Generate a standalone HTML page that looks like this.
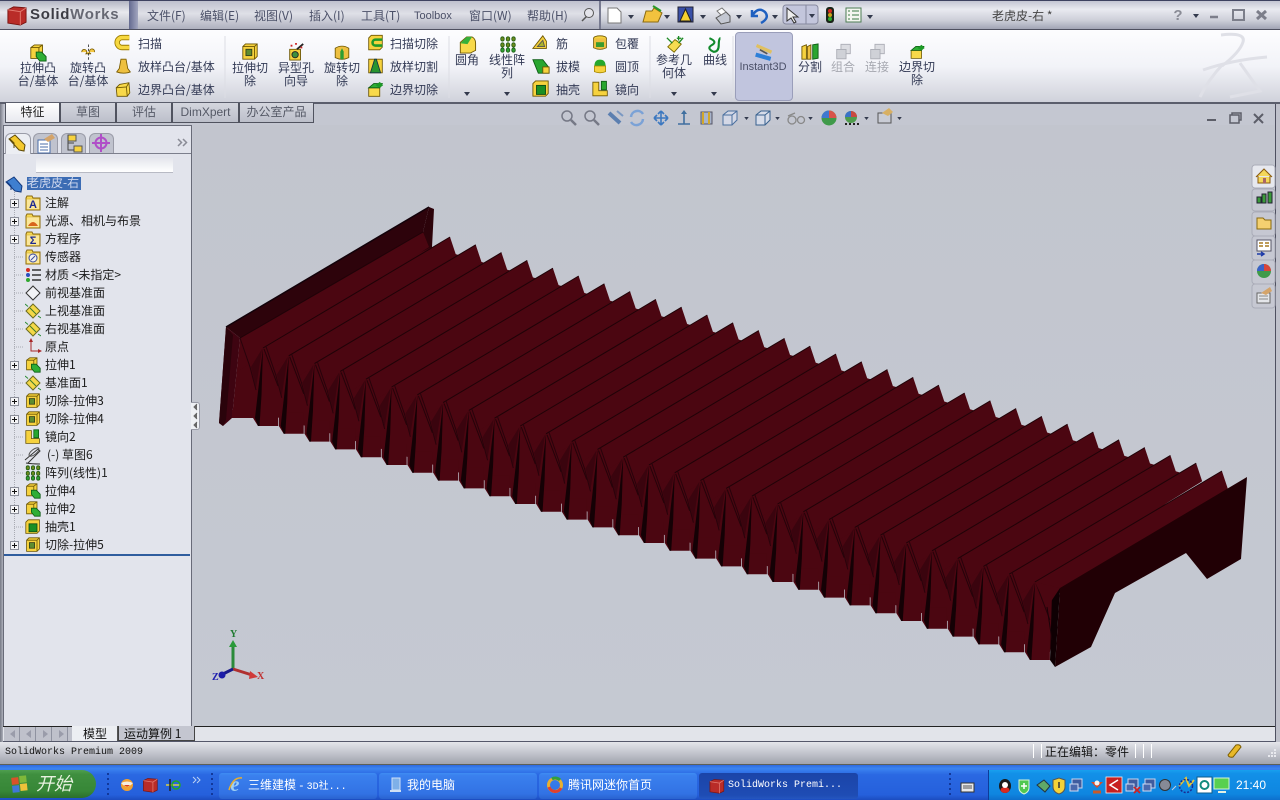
<!DOCTYPE html>
<html><head><meta charset="utf-8"><style>
html,body{margin:0;padding:0;width:1280px;height:800px;overflow:hidden;background:#c4c8d1}
*{box-sizing:border-box}
.a{position:absolute}
.t{position:absolute;white-space:nowrap;font:12px/13px "WenQuanYi Zen Hei","Noto Sans CJK SC",sans-serif;color:#333a55}
.c{text-align:center;transform:translateX(-50%)}
.m{color:#4b5068}
.g{color:#a6a8b0}
.k{color:#111}
.tr{font-size:12px;color:#1c1c1c}
.mono{font-family:"Liberation Mono","WenQuanYi Zen Hei",monospace;font-size:10px}
.w{color:#fff}
.tab{position:absolute;top:103px;height:20px;background:linear-gradient(#d4d6de,#bcbfca);border:1px solid #50535f;border-top:0;text-align:center;font:12px/19px "WenQuanYi Zen Hei",sans-serif;color:#555966}
.tb{position:absolute;top:773px;height:26px;border-radius:3px;background:linear-gradient(#3f8cf3 0,#3a80ee 10%,#3272e4 80%,#2a62cf);color:#fff;font:12px/24px "WenQuanYi Zen Hei",sans-serif;white-space:nowrap}
</style></head><body>
<!-- title bar -->
<div class="a" style="left:0;top:0;width:1280px;height:30px;background:linear-gradient(#c4c6d3,#e9eaf0 30%,#ccced8 70%,#a2a5b5);border-top:1px solid #3e4260;border-bottom:1px solid #4e5060"></div>
<div class="a" style="left:0;top:1px;width:129px;height:28px;background:linear-gradient(#b4b6c4,#e8e9ee 40%,#b6b8c4)"></div>
<div class="a" style="left:129px;top:1px;width:9px;height:28px;background:linear-gradient(90deg,#646a90,#a2a6bf)"></div>
<div class="a" style="left:138px;top:1px;width:462px;height:28px;background:linear-gradient(#bfc1ce,#dfe0e7 45%,#aeb0be)"></div>
<div class="a" style="left:599px;top:1px;width:2px;height:28px;background:#777a90"></div>
<div class="a" style="left:30px;top:4px;font:bold 15px/22px 'Liberation Sans',sans-serif;letter-spacing:.7px;color:#3c3c44">Solid<span style="color:#666873">Works</span></div>
<!-- ribbon -->
<div class="a" style="left:0;top:30px;width:1280px;height:73px;background:linear-gradient(#fdfdff,#f2f3f8 50%,#cfd1da)"></div>
<div class="a" style="left:735px;top:32px;width:58px;height:69px;background:#c1c5de;border:1px solid #9a9eba;border-radius:4px"></div>
<div class="a" style="left:0;top:102px;width:1280px;height:2px;background:#5b5e6c"></div>
<!-- view strip + viewport -->
<div class="a" style="left:0;top:104px;width:1280px;height:660px;background:#c4c7d1"></div>
<div class="a" style="left:193px;top:125px;width:1083px;height:601px;background:linear-gradient(#c2c5ce,#c5c9d2)"></div>
<div class="a" style="left:1275px;top:104px;width:1px;height:638px;background:#4e5060"></div>
<div class="a" style="left:1276px;top:104px;width:4px;height:660px;background:#bfc1cb"></div>
<div class="a" style="left:0;top:104px;width:4px;height:660px;background:linear-gradient(90deg,#777a86,#c0c2cc)"></div>
<!-- tabs -->
<div class="tab" style="left:5px;width:55px;background:linear-gradient(#fff,#e8e9ef);color:#222">特征</div>
<div class="tab" style="left:60px;width:56px">草图</div>
<div class="tab" style="left:116px;width:56px">评估</div>
<div class="tab" style="left:172px;width:67px;font-family:'Liberation Sans',sans-serif">DimXpert</div>
<div class="tab" style="left:239px;width:75px">办公室产品</div>
<!-- left panel -->
<div class="a" style="left:3px;top:125px;width:189px;height:601px;background:#e2e4ec;border:1px solid #686b78;border-bottom:0"></div>
<div class="a" style="left:4px;top:153px;width:187px;height:1px;background:#7c7f8c"></div>
<div class="a" style="left:5px;top:133px;width:26px;height:21px;background:#eceef3;border:1px solid #9a9ca8;border-bottom:0;border-radius:6px 6px 0 0"></div>
<div class="a" style="left:33px;top:133px;width:25px;height:20px;background:#c0c3ce;border:1px solid #9a9ca8;border-bottom:0;border-radius:6px 6px 0 0"></div>
<div class="a" style="left:61px;top:133px;width:25px;height:20px;background:#c0c3ce;border:1px solid #9a9ca8;border-bottom:0;border-radius:6px 6px 0 0"></div>
<div class="a" style="left:89px;top:133px;width:25px;height:20px;background:#c0c3ce;border:1px solid #9a9ca8;border-bottom:0;border-radius:6px 6px 0 0"></div>
<div class="a" style="left:36px;top:158px;width:137px;height:15px;background:linear-gradient(#e4e6ec,#fff);border-bottom:1px solid #b8bac4"></div>
<div class="a" style="left:27px;top:177px;width:54px;height:13px;background:#3c6cb4"></div>
<div class="a" style="left:4px;top:554px;width:186px;height:2px;background:#2f5d9e"></div>
<div class="a" style="left:191px;top:402px;width:9px;height:28px;background:#eef0f4;border:1px solid #9a9ca8;border-left:0;border-radius:0 3px 3px 0"></div>
<!-- bottom tabs -->
<div class="a" style="left:193px;top:726px;width:1082px;height:1px;background:#111"></div>
<div class="a" style="left:3px;top:726px;width:1272px;height:16px;background:#e2e4ea;border-top:1px solid #222;border-bottom:1px solid #55586a"></div>
<div class="a" style="left:4px;top:727px;width:68px;height:14px;background:repeating-linear-gradient(90deg,#bfc1cb 0,#bfc1cb 15px,#8f92a0 15px,#8f92a0 16px)"></div>
<div class="a" style="left:72px;top:726px;width:46px;height:15px;background:#eceef2;border-right:1px solid #555"></div>
<div class="a" style="left:118px;top:726px;width:77px;height:15px;background:#c4c6d0;border:1px solid #444;border-top:0"></div>
<!-- status -->
<div class="a" style="left:0;top:742px;width:1280px;height:23px;background:linear-gradient(#e4e5ea,#bfc1ca 55%,#a0a3ac);border-bottom:1px solid #5c6058"></div>
<div class="a" style="left:1033px;top:744px;width:1px;height:14px;background:#fff"></div>
<div class="a" style="left:1041px;top:744px;width:1px;height:14px;background:#fff"></div>
<div class="a" style="left:1135px;top:744px;width:1px;height:14px;background:#fff"></div>
<div class="a" style="left:1143px;top:744px;width:1px;height:14px;background:#fff"></div>
<div class="a" style="left:1151px;top:744px;width:1px;height:14px;background:#fff"></div>
<!-- taskbar -->
<div class="a" style="left:0;top:765px;width:1280px;height:35px;background:linear-gradient(#2f6bdf,#3b84f0 10%,#2a68e2 28%,#2560dc 85%,#1c4cc0)"></div>
<div class="a" style="left:0;top:770px;width:96px;height:28px;background:linear-gradient(#4f9f4f,#3f8f3f 15%,#378737 75%,#2b6e2b);border-radius:0 14px 14px 0"></div>
<div class="a" style="left:988px;top:770px;width:292px;height:30px;background:linear-gradient(#18a0ee,#1290e8 12%,#0f86e0 80%,#0d6fcc);border-left:1px solid #0d3c9a"></div>
<div class="tb" style="left:219px;width:158px;padding-left:29px">三维建模 - <span style="font-family:'Liberation Mono',monospace;font-size:10px">3D社...</span></div>
<div class="tb" style="left:379px;width:158px;padding-left:28px">我的电脑</div>
<div class="tb" style="left:539px;width:158px;padding-left:29px">腾讯网迷你首页</div>
<div class="tb" style="left:699px;width:159px;padding-left:29px;background:linear-gradient(#1b44a8,#1e4cb4 85%,#2456c0);font-family:'Liberation Mono',monospace;font-size:10px;line-height:26px">SolidWorks Premi...</div>

<svg class="a" style="left:0;top:0" width="1280" height="800" viewBox="0 0 1280 800">
<defs>
<symbol id="box" viewBox="0 0 20 20"><path d="M3 5L7 1H18V14L14 18H3Z" fill="#f6d23e" stroke="#6d5600"/><path d="M3 5H14V18M14 5L18 1" fill="none" stroke="#6d5600"/></symbol>
<symbol id="ext" viewBox="0 0 20 20"><path d="M2 4L6 1H15V12L11 16H2Z" fill="#f6d23e" stroke="#6d5600"/><path d="M2 4H11V16M11 4L15 1" fill="none" stroke="#6d5600"/><path d="M8 9L14 9L19 14V19H12L8 14Z" fill="#2fae35" stroke="#0c5c14"/></symbol>
<symbol id="cut" viewBox="0 0 20 20"><path d="M2 4L5 1H18V15L15 18H2Z" fill="#f6d23e" stroke="#6d5600"/><path d="M2 4H15V18M15 4L18 1" fill="none" stroke="#6d5600"/><rect x="5.500" y="7" width="6.500" height="7" fill="#5d8c30" stroke="#33401a"/></symbol>
<symbol id="rev" viewBox="0 0 20 20"><path d="M2 9a3 3 0 1 1 5 2h6a3 3 0 1 1 4 -2" fill="#f5c842" stroke="#7a5c00"/><path d="M10 0V20" stroke="#333" stroke-dasharray="3 2"/></symbol>
<symbol id="swp" viewBox="0 0 20 20"><path d="M17 4H9a5.500 5.500 0 0 0 0 11H17" fill="none" stroke="#9c7c00" stroke-width="6"/><path d="M17 4H9a5.500 5.500 0 0 0 0 11H17" fill="none" stroke="#f7d840" stroke-width="4"/></symbol>
<symbol id="lof" viewBox="0 0 20 20"><path d="M7 2H13L15 13L18 17Q10 20 2 17L5 13Z" fill="#eec040" stroke="#7a5c00"/></symbol>
<symbol id="bnd" viewBox="0 0 20 20"><path d="M2 8L6 4L17 2L18 14L15 18H3Z" fill="#f8d94a" stroke="#6d5600"/><path d="M2 8L14 7L15 18M14 7L17 2" fill="none" stroke="#6d5600"/></symbol>
<symbol id="hol" viewBox="0 0 20 20"><path d="M3 7H15V19H3Z" fill="#f6d23e" stroke="#6d5600"/><circle cx="9" cy="13" r="3.500" fill="#3d8f3d" stroke="#222"/><path d="M11 7L18 1" stroke="#222" stroke-width="2"/><path d="M4 3h2M9 1h2M15 5h2" stroke="#c22" stroke-width="2"/></symbol>
<symbol id="rcut" viewBox="0 0 20 20"><path d="M2 5Q10 0 18 5V16Q10 20 2 16Z" fill="#eec040" stroke="#6d5600"/><path d="M8 18V9L10 5L12 9V18Z" fill="#2c9d33"/></symbol>
<symbol id="scut" viewBox="0 0 20 20"><path d="M2 4L5 1H18V15L15 18H2Z" fill="#f6d23e" stroke="#6d5600"/><path d="M18 6H10a3.500 3.500 0 0 0 0 7H18" fill="none" stroke="#1f9a2a" stroke-width="3"/></symbol>
<symbol id="lcut" viewBox="0 0 20 20"><path d="M2 2H18V18H2Z" fill="#f6d23e" stroke="#6d5600"/><path d="M9 2H11L16 18H4Z" fill="#28952f" stroke="#134"/></symbol>
<symbol id="bcut" viewBox="0 0 20 20"><path d="M2 8H15V18H2Z" fill="#f8d94a" stroke="#6d5600"/><path d="M2 8L8 3H18L15 8Z" fill="#2fae35" stroke="#0c5c14"/><path d="M10 5L15 1L19 5L15 8Z" fill="#1d9a27"/></symbol>
<symbol id="fil" viewBox="0 0 20 20"><path d="M2 7L9 1H15Q19 3 19 8V16L13 19H2Z" fill="#f8d94a" stroke="#6d5600"/><path d="M2 8L9 1H15L10 9Z" fill="#35b03a"/></symbol>
<symbol id="pat" viewBox="0 0 20 20"><g fill="#6d8a1c" stroke="#1e5c14"><rect x="1.500" y="1" width="4" height="5" rx="2"/><rect x="8" y="1" width="4" height="5" rx="2"/><rect x="14.500" y="1" width="4" height="5" rx="2"/><rect x="1.500" y="8" width="4" height="5" rx="2"/><rect x="8" y="8" width="4" height="5" rx="2"/><rect x="14.500" y="8" width="4" height="5" rx="2"/></g><g fill="#2ea033" stroke="#1e5c14"><rect x="1.500" y="14" width="4" height="5" rx="2"/><rect x="8" y="14" width="4" height="5" rx="2"/><rect x="14.500" y="14" width="4" height="5" rx="2"/></g></symbol>
<symbol id="rib" viewBox="0 0 20 20"><path d="M1 16L12 2L16 8V16Z" fill="#f6d23e" stroke="#6d5600"/><path d="M6 14L12 7L14 14Z" fill="#a9b22c" stroke="#555"/></symbol>
<symbol id="drf" viewBox="0 0 20 20"><path d="M1 3H12L19 12V18H7Z" fill="#28a62f" stroke="#0c5c14"/><path d="M12 11H19V18H12Z" fill="#f6d23e" stroke="#6d5600"/></symbol>
<symbol id="shl" viewBox="0 0 20 20"><path d="M1 4L4 1H18V15L15 18H1Z" fill="#f6d23e" stroke="#6d5600"/><rect x="5" y="6" width="10" height="10" fill="#1a8f24" stroke="#0b4a12"/></symbol>
<symbol id="wrp" viewBox="0 0 20 20"><ellipse cx="10" cy="4" rx="8" ry="3" fill="#f6d23e" stroke="#6d5600"/><path d="M2 4V16Q10 20 18 16V4" fill="#eec040" stroke="#6d5600"/><rect x="5" y="9" width="10" height="6" fill="#3a9b30"/></symbol>
<symbol id="dom" viewBox="0 0 20 20"><path d="M3 10Q3 2 10 2T17 10Z" fill="#26a82c"/><path d="M3 10H17V17Q10 20 3 17Z" fill="#f6d23e" stroke="#a58600"/></symbol>
<symbol id="mir" viewBox="0 0 20 20"><path d="M1 2H8V12H18V18H1Z" fill="#f6d23e" stroke="#6d5600"/><path d="M11 1H17V11H11Z" fill="#28a62f" stroke="#0c5c14"/></symbol>
<symbol id="ref" viewBox="0 0 20 20"><path d="M2 12L10 4L17 9L9 18Z" fill="#f7dc50" stroke="#7a6a00"/><path d="M1 2L7 8M14 8L19 2M14 0V5M12 2.500H17" stroke="#1d8a24" stroke-width="1.500" fill="none"/></symbol>
<symbol id="crv" viewBox="0 0 20 20"><path d="M4 2Q14 6 7 10T9 18Q15 18 15 10T17 2" fill="none" stroke="#128a2c" stroke-width="2.500"/></symbol>
<symbol id="ins" viewBox="0 0 24 24"><path d="M3 3L21 11" stroke="#e0c060" stroke-width="4"/><path d="M2 14L20 19" stroke="#2d7fd8" stroke-width="5"/><path d="M7 8L16 13" stroke="#555" stroke-width="2"/></symbol>
<symbol id="spl" viewBox="0 0 20 20"><path d="M1 4L6 2V18H1Z" fill="#f6d23e" stroke="#6d5600"/><path d="M7 4L11 2V18H7Z" fill="#eec040" stroke="#6d5600"/><path d="M13 2L19 1V17L13 18Z" fill="#2aa530" stroke="#0c5c14"/></symbol>
<symbol id="cmb" viewBox="0 0 20 20"><path d="M7 1H18V12H7Z" fill="#dcdde2" stroke="#aaacb4"/><path d="M2 7H13V18H2Z" fill="#cfd1d7" stroke="#aaacb4"/></symbol>
<symbol id="fol" viewBox="0 0 16 16"><path d="M1 3L2 1H7L8 3H15V15H1Z" fill="#f8da55" stroke="#8a6a10"/><rect x="1.500" y="4" width="13" height="10.500" fill="#fbe79a" stroke="#c9a52c" stroke-width=".5"/></symbol>
<symbol id="pln" viewBox="0 0 16 16"><path d="M8 1L15 8L8 15L1 8Z" fill="#f4d848" stroke="#6c6c20"/><path d="M5 5L11 11" stroke="#3b7a2c"/><path d="M0 1L3 3.500M13 13L16 15" stroke="#2a8a34"/></symbol>
<symbol id="pl0" viewBox="0 0 16 16"><path d="M8 1L15 8L8 15L1 8Z" fill="#f2f3f6" stroke="#333"/></symbol>
<symbol id="plus" viewBox="0 0 9 9"><rect x=".5" y=".5" width="8" height="8" fill="#f4f4f6" stroke="#8c8f9a"/><path d="M2 4.500H7M4.500 2V7" stroke="#111"/></symbol>
<symbol id="arr" viewBox="0 0 6 4"><path d="M0 0H6L3 4Z" fill="#333a4d"/></symbol>
<symbol id="sw" viewBox="0 0 22 22"><path d="M2 5L8 2L21 3L21 18L15 21L2 19Z" fill="#b92c28" stroke="#7a1512"/><path d="M15 7V21M2 5L15 7L21 3" fill="none" stroke="#e47c72"/></symbol>
<symbol id="mon" viewBox="0 0 16 16"><rect x="3" y="1" width="10" height="9" fill="#3f5c9f" stroke="#c8d4ee"/><rect x="1" y="6" width="8" height="7" fill="#4a69ad" stroke="#d0dbf2"/></symbol>
<g id="pleat">
<polygon points="263,348 450,237 456,255 270,370" fill="#4b0611"/>
<polygon points="253,405 253,418 258,426 278,426 278,405" fill="#4b0611"/>
<polygon points="251,367 262,349 256,388" fill="#3a040e"/>
<polygon points="263,348 255,418 258,426 259.500,426 261.500,395" fill="#140105"/>
<path d="M263,348L450,237" stroke="#1f0308" stroke-width="1" fill="none"/>
<path d="M264,349L278,386" stroke="#240309" stroke-width="1" fill="none"/>
<path d="M240,338L250,367L256,390" stroke="#28030b" stroke-width="1" fill="none"/>
</g>
</defs>

<!-- model -->
<polygon points="240,338 423,232 432,247 1198,478 1060,588 1050,652 253,410 232,418" fill="#4b0611"/>
<polygon points="423,232 429,207 434,209 432,247 240,338" fill="#2c030a"/>
<polygon points="226,327 429,207 423,232 240,338" fill="#2d030b"/>
<path d="M226,327L429,207" stroke="#12020a" stroke-width="1.500"/>
<polygon points="226,327 240,338 232,418 223,426 219,423" fill="#3e0411"/>
<polygon points="226,327 233,335 226,420 223,426 219,423" fill="#2a030b"/>
<polygon points="423,232 429,247 240,370 240,338" fill="#4b0611"/>
<polygon points="232,410 232,418 253,418 253,410" fill="#4b0611"/>
<path d="M240,338L423,232" stroke="#1f0308" stroke-width="1"/>
<use href="#pleat"/>
<use href="#pleat" x="25.730" y="7.800"/><use href="#pleat" x="51.460" y="15.600"/><use href="#pleat" x="77.190" y="23.400"/><use href="#pleat" x="102.920" y="31.200"/><use href="#pleat" x="128.650" y="39"/><use href="#pleat" x="154.380" y="46.800"/><use href="#pleat" x="180.110" y="54.600"/><use href="#pleat" x="205.840" y="62.400"/><use href="#pleat" x="231.570" y="70.200"/><use href="#pleat" x="257.300" y="78"/><use href="#pleat" x="283.030" y="85.800"/><use href="#pleat" x="308.760" y="93.600"/><use href="#pleat" x="334.490" y="101.400"/><use href="#pleat" x="360.220" y="109.200"/><use href="#pleat" x="385.950" y="117"/><use href="#pleat" x="411.680" y="124.800"/><use href="#pleat" x="437.410" y="132.600"/><use href="#pleat" x="463.140" y="140.400"/><use href="#pleat" x="488.870" y="148.200"/><use href="#pleat" x="514.600" y="156"/><use href="#pleat" x="540.330" y="163.800"/><use href="#pleat" x="566.060" y="171.600"/><use href="#pleat" x="591.790" y="179.400"/><use href="#pleat" x="617.520" y="187.200"/><use href="#pleat" x="643.250" y="195"/><use href="#pleat" x="668.980" y="202.800"/><use href="#pleat" x="694.710" y="210.600"/><use href="#pleat" x="720.440" y="218.400"/><use href="#pleat" x="746.170" y="226.200"/><use href="#pleat" x="771.900" y="234"/>
<polygon points="1055,667 1060,588 1247,477 1241,559 1207,579 1186,553 1115,593 1091,647" fill="#210005"/>
<polygon points="1055,667 1060,588 1052,594 1050,660" fill="#0f0003"/>
<polygon points="1035,582 1060,588 1052,600 1047,607" fill="#4b0611"/>
<path d="M1047,607L1052,640" stroke="#1a0208"/>

<!-- triad -->
<path d="M233,669V645" stroke="#2a8a3a" stroke-width="3"/><path d="M229,647L233,640L237,647Z" fill="#2a9a3a"/>
<path d="M233,669L252,675" stroke="#b03030" stroke-width="3"/><path d="M250,671L258,677L249,679Z" fill="#d03a3a"/>
<path d="M233,669L223,674" stroke="#1a1a8a" stroke-width="3"/><circle cx="222" cy="675" r="3.500" fill="#1c1ca8"/>

<!-- titlebar icons -->
<use href="#sw" x="6" y="5" width="21" height="21"/>
<path d="M582 21L588 15" stroke="#555" stroke-width="1.500"/><circle cx="589" cy="13" r="4.500" fill="#e4e4ea" stroke="#555"/>
<path d="M608 8H617L621 12V23H608Z" fill="#fff" stroke="#777"/>
<use href="#arr" x="628" y="15" width="6" height="4"/>
<path d="M643 22L646 11H652L654 8L662 13L658 22Z" fill="#f2c23e" stroke="#8a6a10"/><path d="M653 6L661 11" stroke="#2a9a2a" stroke-width="2"/>
<use href="#arr" x="664" y="15" width="6" height="4"/>
<rect x="678" y="7" width="15" height="15" fill="#3a50a8" stroke="#223"/><path d="M680 21L685.500 9L691 21Z" fill="#f6d030" stroke="#222"/>
<use href="#arr" x="700" y="15" width="6" height="4"/>
<path d="M716 18L726 12L730 16V22L721 24Z" fill="#c4c8d2" stroke="#555"/><path d="M717 11L722 8L726 12L721 15Z" fill="#fff" stroke="#777"/>
<use href="#arr" x="736" y="15" width="6" height="4"/>
<path d="M752 10L752 16L758 16M752 16Q758 6 765 12Q770 18 761 23" fill="none" stroke="#1f60c0" stroke-width="2.500"/>
<use href="#arr" x="772" y="15" width="6" height="4"/>
<rect x="783" y="5" width="35" height="19" rx="3" fill="#c3c6dc" stroke="#85889e"/><path d="M806 5V24" stroke="#85889e"/><path d="M787 8V21L791 18L794 23L796 22L793 17H798Z" fill="#eee" stroke="#333"/>
<use href="#arr" x="809" y="14" width="6" height="4"/>
<rect x="826" y="7" width="8" height="16" rx="3" fill="#1a2418"/><circle cx="830" cy="11" r="2" fill="#d42a20"/><circle cx="830" cy="15" r="2" fill="#c8a018"/><circle cx="830" cy="19" r="2" fill="#2fa82f"/>
<rect x="846" y="8" width="15" height="14" fill="#f4f6f0" stroke="#4d7c54"/><path d="M848 11h2M848 15h2M848 19h2M852 11h7M852 15h7M852 19h7" stroke="#3a7a44"/>
<use href="#arr" x="867" y="15" width="6" height="4"/>
<text x="1178" y="20" font-family="Liberation Sans" font-weight="bold" font-size="15" fill="#8a8c96" text-anchor="middle">?</text>
<use href="#arr" x="1193" y="14" width="6" height="4"/>
<path d="M1210 17H1218" stroke="#7c7e8a" stroke-width="2.500"/>
<rect x="1233" y="10" width="11" height="10" fill="none" stroke="#7c7e8a" stroke-width="2"/>
<path d="M1257 11L1266 19M1266 11L1257 19" stroke="#7c7e8a" stroke-width="3"/>

<!-- ds watermark -->
<g fill="none" stroke="#dfe0e7" stroke-width="3"><path d="M1221 35Q1246 32 1243 42Q1240 52 1222 66"/><path d="M1267 57Q1232 60 1203 70"/><path d="M1223 64Q1208 80 1200 97"/><path d="M1240 63L1260 91L1230 97"/></g>

<!-- ribbon icons -->
<use href="#ext" x="29" y="44" width="18" height="18"/>
<use href="#rev" x="80" y="44" width="17" height="18"/>
<use href="#swp" x="114" y="34" width="18" height="18"/>
<use href="#lof" x="115" y="57" width="17" height="18"/>
<use href="#bnd" x="114" y="81" width="18" height="17"/>
<use href="#cut" x="241" y="43" width="18" height="18"/>
<use href="#hol" x="287" y="43" width="18" height="18"/>
<use href="#rcut" x="333" y="44" width="18" height="17"/>
<use href="#scut" x="367" y="34" width="17" height="18"/>
<use href="#lcut" x="367" y="57" width="17" height="18"/>
<use href="#bcut" x="367" y="81" width="17" height="17"/>
<use href="#fil" x="458" y="36" width="19" height="18"/>
<use href="#pat" x="499" y="36" width="18" height="17"/>
<use href="#rib" x="532" y="34" width="18" height="18"/>
<use href="#drf" x="532" y="57" width="18" height="18"/>
<use href="#shl" x="532" y="80" width="18" height="18"/>
<use href="#wrp" x="592" y="34" width="16" height="18"/>
<use href="#dom" x="592" y="57" width="16" height="18"/>
<use href="#mir" x="592" y="80" width="17" height="18"/>
<use href="#ref" x="666" y="36" width="18" height="18"/>
<use href="#crv" x="706" y="36" width="17" height="18"/>
<use href="#ins" x="754" y="43" width="20" height="20"/>
<use href="#spl" x="801" y="43" width="18" height="18"/>
<use href="#cmb" x="835" y="43" width="17" height="18"/>
<use href="#cmb" x="869" y="43" width="17" height="18"/>
<use href="#bcut" x="909" y="44" width="17" height="16"/>
<use href="#arr" x="464" y="92" width="6" height="4"/><use href="#arr" x="504" y="92" width="6" height="4"/><use href="#arr" x="671" y="92" width="6" height="4"/><use href="#arr" x="711" y="92" width="6" height="4"/>
<path d="M225 36V98M449 36V98M650 36V98M733 36V98" stroke="#dcdde4"/>

<!-- view toolbar -->
<g fill="none" stroke="#767986" stroke-width="1.500"><circle cx="567" cy="116" r="5"/><path d="M571 120L576 125" stroke-width="2.500"/><circle cx="590" cy="116" r="5"/><path d="M594 120L599 125" stroke-width="2.500"/></g>
<path d="M609 113L620 123" stroke="#5b7fb0" stroke-width="4"/><path d="M617 111L623 116" stroke="#7a98c2" stroke-width="2"/>
<path d="M631 117A6.500 6.500 0 0 1 643 114M643 119A6.500 6.500 0 0 1 631 122" fill="none" stroke="#7ba2d6" stroke-width="2.500"/>
<path d="M654 118H668M661 111V125M654 118l3 -3M654 118l3 3M668 118l-3 -3M668 118l-3 3M661 111l-3 3M661 111l3 3M661 125l-3 -3M661 125l3 -3" fill="none" stroke="#3c78c0" stroke-width="1.600"/>
<path d="M684 112V124M678 124H690" stroke="#3f6f9f" stroke-width="1.600"/><path d="M681 114L684 110L687 114Z" fill="#3f6f9f"/>
<path d="M701 112H712V124H701Z" fill="#a8b4cc" stroke="#556"/><path d="M703 112V124M709 112V124" stroke="#d2a82a" stroke-width="2"/>
<path d="M723 115L728 111H737V120L732 125H723Z" fill="#d4d8e6" stroke="#4a6f9f"/><path d="M723 115H732V125M732 115L737 111" fill="none" stroke="#4a6f9f"/>
<use href="#arr" x="744" y="117" width="5" height="3"/>
<path d="M756 115L761 111H770V120L765 125H756Z" fill="#d6dce9" stroke="#38618e"/><path d="M756 115H765V125M765 115L770 111" fill="none" stroke="#38618e"/>
<use href="#arr" x="775" y="117" width="5" height="3"/>
<g fill="none" stroke="#888" stroke-width="1.300"><circle cx="792" cy="120" r="4"/><circle cx="801" cy="120" r="3.500"/><path d="M788 116L795 113"/></g>
<use href="#arr" x="808" y="117" width="5" height="3"/>
<circle cx="829" cy="118" r="7.500" fill="#3f9a4a"/><path d="M829 110.500A7.500 7.500 0 0 1 836.500 118L829 118Z" fill="#d8544a"/><path d="M821.500 118A7.500 7.500 0 0 1 829 110.500V118Z" fill="#3f78d0"/>
<circle cx="851" cy="117" r="6" fill="#4f9c4c"/><path d="M851 111A6 6 0 0 1 857 117H851Z" fill="#c84a40"/><path d="M845 117A6 6 0 0 1 851 111V117Z" fill="#3a72c8"/><path d="M845 123h2v2h-2zM849 123h2v2h-2zM853 123h2v2h-2zM857 123h2v2h-2z" fill="#222"/>
<use href="#arr" x="864" y="117" width="5" height="3"/>
<rect x="878" y="113" width="13" height="10" fill="#c9ccd5" stroke="#555"/><path d="M882 113L889 108L893 112L888 116Z" fill="#d8b063"/>
<use href="#arr" x="897" y="117" width="5" height="3"/>
<path d="M1207 120H1216" stroke="#5c5e68" stroke-width="2"/>
<rect x="1230" y="115" width="9" height="8" fill="none" stroke="#5c5e68" stroke-width="1.500"/><path d="M1232 115V113H1241V120H1239" fill="none" stroke="#5c5e68" stroke-width="1.500"/>
<path d="M1254 114L1263 123M1263 114L1254 123" stroke="#5c5e68" stroke-width="2"/>

<!-- panel tab icons -->
<path d="M9 139L15 135L25 145L24 151L19 150Z" fill="#f4c92e" stroke="#5e4a08"/><path d="M10 139L14 143V148" fill="none" stroke="#5e4a08"/>
<path d="M38 140H50V153H38Z" fill="#fff" stroke="#4a6ea8"/><path d="M40 144H48M40 147H48M40 150H48" stroke="#4a6ea8"/><path d="M44 139L52 134L55 138L48 142Z" fill="#d4a46a"/>
<rect x="68" y="135" width="8" height="6" fill="#f6d23e" stroke="#555"/><rect x="74" y="146" width="8" height="6" fill="#f6d23e" stroke="#555"/><path d="M68 135V150H74M68 143H74" fill="none" stroke="#444"/>
<circle cx="101" cy="143" r="5.500" fill="none" stroke="#b04fc8" stroke-width="2"/><path d="M92 143H110M101 134V152" stroke="#b04fc8" stroke-width="2"/>
<path d="M178 139L181.500 142.500L178 146M183 139L186.500 142.500L183 146" fill="none" stroke="#8a8c96" stroke-width="1.500"/>

<!-- tree lines -->
<path d="M14.500 192V544" stroke="#a8aab2" stroke-dasharray="1 1" fill="none"/>
<path d="M14 257H24M14 275H24M14 293H24M14 311H24M14 329H24M14 347H24M14 383H24M14 437H24M14 455H24M14 473H24M14 527H24" stroke="#a8aab2" stroke-dasharray="1 1"/>
<path d="M6 182L14 177L22 186L21 192L15 191Z" fill="#3f7fd0" stroke="#133a80"/><path d="M7 182L11 186V190" fill="none" stroke="#133a80"/>
<use href="#plus" x="10" y="199" width="9" height="9"/><use href="#plus" x="10" y="217" width="9" height="9"/><use href="#plus" x="10" y="235" width="9" height="9"/><use href="#plus" x="10" y="361" width="9" height="9"/><use href="#plus" x="10" y="397" width="9" height="9"/><use href="#plus" x="10" y="415" width="9" height="9"/><use href="#plus" x="10" y="487" width="9" height="9"/><use href="#plus" x="10" y="505" width="9" height="9"/><use href="#plus" x="10" y="541" width="9" height="9"/>
<use href="#fol" x="25" y="195" width="16" height="16"/>
<text x="33" y="208" font-family="Liberation Sans" font-weight="bold" font-size="11" fill="#1e2a90" text-anchor="middle">A</text>
<use href="#fol" x="25" y="213" width="16" height="16"/>
<path d="M28 226Q33 218 38 226Z" fill="#d8641c"/>
<use href="#fol" x="25" y="231" width="16" height="16"/>
<text x="33" y="244" font-family="Liberation Sans" font-weight="bold" font-size="11" fill="#1e2a90" text-anchor="middle">Σ</text>
<use href="#fol" x="25" y="249" width="16" height="16"/>
<circle cx="33" cy="258" r="4" fill="#f0f0f0" stroke="#3a4a9c"/><path d="M31 260L35 256" stroke="#3a4a9c"/>
<circle cx="28" cy="270" r="2" fill="#d42a20"/><circle cx="28" cy="275" r="2" fill="#2a4fc0"/><circle cx="28" cy="280" r="2" fill="#2fa82f"/>
<path d="M32 270H41M32 275H41M32 280H41" stroke="#333" stroke-width="1.500"/>
<use href="#pl0" x="25" y="285" width="16" height="16"/><use href="#pln" x="25" y="303" width="16" height="16"/><use href="#pln" x="25" y="321" width="16" height="16"/>
<path d="M31 339V351H40" fill="none" stroke="#a8282a"/><path d="M29 342L31 338L33 342Z" fill="#a8282a"/><path d="M38 349L42 351L38 353Z" fill="#a8282a"/>
<use href="#ext" x="25" y="357" width="16" height="16"/><use href="#pln" x="25" y="375" width="16" height="16"/>
<use href="#cut" x="25" y="393" width="16" height="16"/><use href="#cut" x="25" y="411" width="16" height="16"/>
<use href="#mir" x="25" y="429" width="16" height="16"/>
<path d="M25 460L38 449L40 451L28 463M26 463Q32 464 40 464" fill="none" stroke="#333"/><ellipse cx="34" cy="452" rx="6" ry="2.500" transform="rotate(-38 34 452)" fill="none" stroke="#555"/>
<use href="#pat" x="25" y="465" width="16" height="16"/>
<use href="#ext" x="25" y="483" width="16" height="16"/><use href="#ext" x="25" y="501" width="16" height="16"/>
<use href="#shl" x="25" y="519" width="16" height="16"/><use href="#cut" x="25" y="537" width="16" height="16"/>
<path d="M197 404L194 407L197 410M197 413L194 416L197 419M197 422L194 425L197 428" fill="#666" stroke="#666"/>

<!-- bottom nav glyphs -->
<path d="M15 730L10 734L15 738ZM31 730L26 734L31 738ZM43 730L48 734L43 738ZM59 730L64 734L59 738Z" fill="#9a9caa"/>

<!-- task pane -->
<rect x="1252" y="165" width="23" height="23" fill="#e6e8ee" stroke="#aaacb8" rx="3"/>
<rect x="1252" y="189" width="23" height="22" fill="#c6c8d2" stroke="#aaacb8" rx="3"/>
<rect x="1252" y="212" width="23" height="24" fill="#c6c8d2" stroke="#aaacb8" rx="3"/>
<rect x="1252" y="236" width="23" height="24" fill="#c6c8d2" stroke="#aaacb8" rx="3"/>
<rect x="1252" y="260" width="23" height="24" fill="#c6c8d2" stroke="#aaacb8" rx="3"/>
<rect x="1252" y="284" width="23" height="24" fill="#c6c8d2" stroke="#aaacb8" rx="3"/>
<path d="M1256 177L1264 169L1272 177M1258 176V183H1270V176" fill="#f4d75a" stroke="#8a5a10"/><rect x="1263" y="178" width="3" height="5" fill="#a66"/>
<path d="M1257 203V197H1261V203ZM1262 203V194H1266V203ZM1268 203V192H1272V203Z" fill="#3a9a3a" stroke="#223"/>
<path d="M1257 218H1263L1265 220H1271V229H1257Z" fill="#f4d070" stroke="#8a6a10"/>
<rect x="1257" y="240" width="14" height="11" fill="#fff" stroke="#556"/><path d="M1259 243H1263M1265 243H1269M1259 246H1263M1265 246H1269" stroke="#a87c20" stroke-width="1.500"/><path d="M1257 254H1264M1261 252L1264 254L1261 256" stroke="#1c3aa8" stroke-width="1.500" fill="none"/>
<circle cx="1264" cy="271" r="7" fill="#3f9a4a"/><path d="M1264 264A7 7 0 0 1 1271 271H1264Z" fill="#d8443a"/><path d="M1257 271A7 7 0 0 1 1264 264V271Z" fill="#3a62c8"/>
<rect x="1257" y="293" width="13" height="10" fill="#e4e6ea" stroke="#666"/><path d="M1259 296H1268M1259 299H1268" stroke="#888"/><path d="M1261 293L1270 287L1272 291L1266 295Z" fill="#d4a46a"/>

<!-- status tag -->
<path d="M1228 755L1236 745Q1240 744 1241 747L1233 757Q1229 758 1228 755Z" fill="#e8b828" stroke="#7a5c00"/>
<g fill="#e8e9ee"><rect x="1274" y="749" width="2" height="2"/><rect x="1271" y="752" width="2" height="2"/><rect x="1274" y="752" width="2" height="2"/><rect x="1268" y="755" width="2" height="2"/><rect x="1271" y="755" width="2" height="2"/><rect x="1274" y="755" width="2" height="2"/></g>

<!-- taskbar icons -->
<g transform="rotate(-6 20 785)"><rect x="12" y="777" width="7" height="7" fill="#d8522a"/><rect x="20" y="776" width="7" height="7" fill="#7fb83a"/><rect x="12" y="785" width="7" height="7" fill="#3f78d8"/><rect x="20" y="784" width="7" height="7" fill="#eec23a"/></g>
<circle cx="127" cy="785" r="6" fill="#f0a030"/><path d="M121 783Q127 780 133 783Q127 790 121 783Z" fill="#f4ede0"/><path d="M124 785Q127 788 130 785" fill="#d83a20"/>
<use href="#sw" x="142" y="777" width="16" height="16"/>
<path d="M166 785H180" stroke="#d8d040" stroke-width="1.500"/><path d="M170 779V791" stroke="#222" stroke-width="1.500"/><circle cx="176" cy="785" r="4" fill="none" stroke="#2a2" stroke-width="1.500"/>
<path d="M193 777L196 780L193 783M197 777L200 780L197 783" fill="none" stroke="#bcd2f4"/>
<g fill="#12389a"><rect x="107" y="773" width="2" height="2"/><rect x="107" y="778" width="2" height="2"/><rect x="107" y="783" width="2" height="2"/><rect x="107" y="788" width="2" height="2"/><rect x="107" y="793" width="2" height="2"/><rect x="211" y="773" width="2" height="2"/><rect x="211" y="778" width="2" height="2"/><rect x="211" y="783" width="2" height="2"/><rect x="211" y="788" width="2" height="2"/><rect x="211" y="793" width="2" height="2"/><rect x="949" y="773" width="2" height="2"/><rect x="949" y="778" width="2" height="2"/><rect x="949" y="783" width="2" height="2"/><rect x="949" y="788" width="2" height="2"/><rect x="949" y="793" width="2" height="2"/></g>
<text x="235" y="791" font-family="Liberation Serif" font-style="italic" font-weight="bold" font-size="20" fill="#9fd0f4" text-anchor="middle">e</text>
<path d="M229 790Q233 777 242 778" fill="none" stroke="#e8b030" stroke-width="1.500"/>
<path d="M392 778H400V790H392Z" fill="#7fb0e8" stroke="#cfe0f8"/><path d="M390 791H401" stroke="#d0e0f4" stroke-width="2"/>
<circle cx="555" cy="785" r="6.500" fill="none" stroke="#e8b030" stroke-width="3"/><path d="M549 787A6.500 6.500 0 0 0 561 788" fill="none" stroke="#e04030" stroke-width="3"/><path d="M552 779A6.500 6.500 0 0 1 560 780" fill="none" stroke="#30a040" stroke-width="3"/>
<use href="#sw" x="708" y="778" width="17" height="16"/>
<!-- tray -->
<rect x="961" y="783" width="13" height="9" fill="#e8e8ea" stroke="#333"/><path d="M963 786h9M963 788h9" stroke="#555"/>
<ellipse cx="1005" cy="786" rx="6" ry="7" fill="#1a1a1a"/><ellipse cx="1005" cy="790" rx="4.500" ry="3" fill="#d82a20"/><circle cx="1005" cy="785" r="3" fill="#fff"/>
<path d="M1019 780H1029V788Q1029 792 1024 794Q1019 792 1019 788Z" fill="#50c850" stroke="#d8f4d8"/><path d="M1021 786H1027M1024 783V789" stroke="#fff" stroke-width="1.500"/>
<path d="M1037 785L1044 780L1050 786L1045 792Z" fill="#60a868" stroke="#234"/>
<path d="M1053 780L1059 778L1065 780V787Q1065 792 1059 794Q1053 792 1053 787Z" fill="#f4d238" stroke="#555"/><path d="M1059 782V788" stroke="#333" stroke-width="1.500"/>
<use href="#mon" x="1069" y="778" width="16" height="16"/>
<path d="M1091 782H1103L1097 788Z" fill="#d84a2a"/><circle cx="1097" cy="783" r="2.500" fill="#f4f4f4"/><path d="M1093 792H1101" stroke="#c85a2a" stroke-width="3"/>
<rect x="1106" y="777" width="16" height="16" fill="#c82020" stroke="#f0f0f0" stroke-width=".8"/><path d="M1118 780L1110 785L1118 790" fill="none" stroke="#fff" stroke-width="1.500"/>
<use href="#mon" x="1125" y="778" width="16" height="16"/>
<path d="M1134 787L1140 793M1140 787L1134 793" stroke="#d02020" stroke-width="1.800"/>
<use href="#mon" x="1142" y="778" width="16" height="16"/>
<circle cx="1165" cy="785" r="5.500" fill="#868a96" stroke="#333"/><path d="M1172 790L1176 786" stroke="#c8d0e0"/>
<path d="M1179 786L1186 778L1189 786L1194 780" fill="none" stroke="#e8c838" stroke-width="1.800"/><circle cx="1186" cy="786" r="6.500" fill="none" stroke="#1a2a90" stroke-dasharray="2 1.500" stroke-width="1.500"/>
<rect x="1197" y="777" width="15" height="16" fill="#fff" stroke="#0c5c8c"/><circle cx="1204.500" cy="785" r="4" fill="none" stroke="#128a7c" stroke-width="2"/>
<rect x="1214" y="778" width="15" height="11" fill="#58d050" stroke="#d4f4d4"/><path d="M1218 792H1226" stroke="#e4f0e4" stroke-width="2"/>
</svg>

<!-- menu text -->
<div class="t m" style="left:147px;top:9px">文件(F)</div>
<div class="t m" style="left:200px;top:9px">编辑(E)</div>
<div class="t m" style="left:254px;top:9px">视图(V)</div>
<div class="t m" style="left:309px;top:9px">插入(I)</div>
<div class="t m" style="left:361px;top:9px">工具(T)</div>
<div class="t m" style="left:414px;top:10px;font-family:'Liberation Sans',sans-serif;font-size:11px">Toolbox</div>
<div class="t m" style="left:469px;top:9px">窗口(W)</div>
<div class="t m" style="left:527px;top:9px">帮助(H)</div>
<div class="t" style="left:992px;top:9px;color:#444">老虎皮-右 *</div>

<!-- ribbon text -->
<div class="t c" style="left:38px;top:61px">拉伸凸<br>台/基体</div>
<div class="t c" style="left:88px;top:61px">旋转凸<br>台/基体</div>
<div class="t" style="left:138px;top:37px">扫描</div>
<div class="t" style="left:138px;top:60px">放样凸台/基体</div>
<div class="t" style="left:138px;top:83px">边界凸台/基体</div>
<div class="t c" style="left:250px;top:61px">拉伸切<br>除</div>
<div class="t c" style="left:296px;top:61px">异型孔<br>向导</div>
<div class="t c" style="left:342px;top:61px">旋转切<br>除</div>
<div class="t" style="left:390px;top:37px">扫描切除</div>
<div class="t" style="left:390px;top:60px">放样切割</div>
<div class="t" style="left:390px;top:83px">边界切除</div>
<div class="t c" style="left:467px;top:53px">圆角</div>
<div class="t c" style="left:507px;top:53px">线性阵<br>列</div>
<div class="t" style="left:556px;top:37px">筋</div>
<div class="t" style="left:556px;top:60px">拔模</div>
<div class="t" style="left:556px;top:83px">抽壳</div>
<div class="t" style="left:615px;top:37px">包覆</div>
<div class="t" style="left:615px;top:60px">圆顶</div>
<div class="t" style="left:615px;top:83px">镜向</div>
<div class="t c" style="left:674px;top:53px">参考几<br>何体</div>
<div class="t c" style="left:715px;top:53px">曲线</div>
<div class="t c m" style="left:763px;top:61px;font-family:'Liberation Sans',sans-serif;font-size:11px">Instant3D</div>
<div class="t c" style="left:810px;top:60px">分割</div>
<div class="t c g" style="left:843px;top:60px">组合</div>
<div class="t c g" style="left:877px;top:60px">连接</div>
<div class="t c" style="left:917px;top:60px">边界切<br>除</div>

<!-- tree text -->
<div class="t" style="left:27px;top:176px;color:#cfd8ee">老虎皮-右</div>
<div class="t tr" style="left:45px;top:196px">注解</div>
<div class="t tr" style="left:45px;top:214px">光源、相机与布景</div>
<div class="t tr" style="left:45px;top:232px">方程序</div>
<div class="t tr" style="left:45px;top:250px">传感器</div>
<div class="t tr" style="left:45px;top:268px">材质 &lt;未指定&gt;</div>
<div class="t tr" style="left:45px;top:286px">前视基准面</div>
<div class="t tr" style="left:45px;top:304px">上视基准面</div>
<div class="t tr" style="left:45px;top:322px">右视基准面</div>
<div class="t tr" style="left:45px;top:340px">原点</div>
<div class="t tr" style="left:45px;top:358px">拉伸1</div>
<div class="t tr" style="left:45px;top:376px">基准面1</div>
<div class="t tr" style="left:45px;top:394px">切除-拉伸3</div>
<div class="t tr" style="left:45px;top:412px">切除-拉伸4</div>
<div class="t tr" style="left:45px;top:430px">镜向2</div>
<div class="t tr" style="left:47px;top:448px">(-) 草图6</div>
<div class="t tr" style="left:45px;top:466px">阵列(线性)1</div>
<div class="t tr" style="left:45px;top:484px">拉伸4</div>
<div class="t tr" style="left:45px;top:502px">拉伸2</div>
<div class="t tr" style="left:45px;top:520px">抽壳1</div>
<div class="t tr" style="left:45px;top:538px">切除-拉伸5</div>

<!-- triad labels -->
<div class="t" style="left:230px;top:629px;font:bold 10px/11px 'Liberation Serif',serif;color:#1f7a30">Y</div>
<div class="t" style="left:257px;top:671px;font:bold 10px/11px 'Liberation Serif',serif;color:#c03030">X</div>
<div class="t" style="left:212px;top:672px;font:bold 10px/11px 'Liberation Serif',serif;color:#2020b0">Z</div>

<!-- bottom text -->
<div class="t k" style="left:83px;top:727px">模型</div>
<div class="t k" style="left:124px;top:727px">运动算例 1</div>
<div class="t mono k" style="left:5px;top:746px">SolidWorks Premium 2009</div>
<div class="t k" style="left:1045px;top:745px">正在编辑：零件</div>
<div class="a" style="left:36px;top:772px;font:italic 18px/24px 'WenQuanYi Zen Hei',sans-serif;color:#e8f2e0">开始</div>
<div class="t w" style="left:1236px;top:779px;font:12px/13px 'Liberation Sans',sans-serif">21:40</div>
</body></html>
